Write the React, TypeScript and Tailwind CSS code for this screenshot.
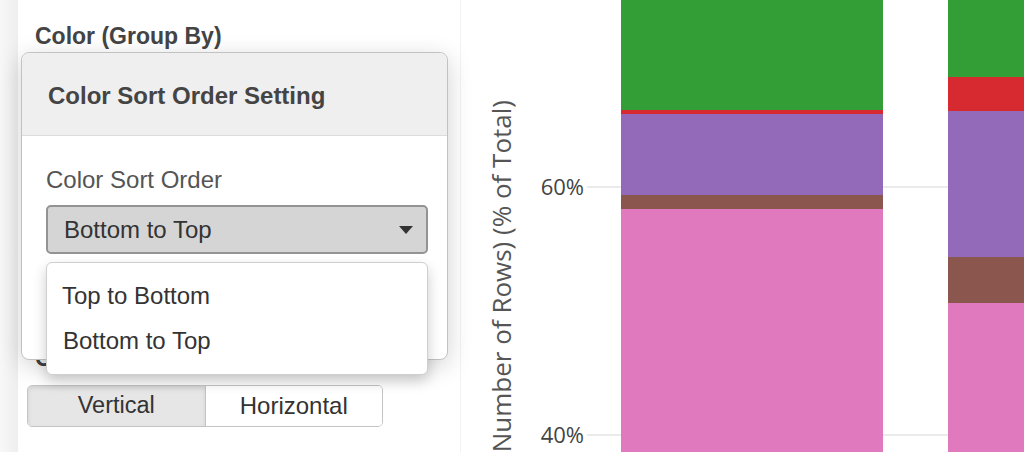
import React from "react";

const bar1 = [
  { y: 0, h: 110, c: "#339e35" },
  { y: 110, h: 4, c: "#d62a30" },
  { y: 114, h: 81, c: "#9369b9" },
  { y: 195, h: 14, c: "#8b564d" },
  { y: 209, h: 243, c: "#e079bd" },
];

const bar2 = [
  { y: 0, h: 77, c: "#339e35" },
  { y: 77, h: 34, c: "#d62a30" },
  { y: 111, h: 146, c: "#9369b9" },
  { y: 257, h: 46, c: "#8b564d" },
  { y: 303, h: 149, c: "#e079bd" },
];

const Caret = () => (
  <svg width="14" height="8" viewBox="0 0 14 8" className="shrink-0">
    <path d="M0 0 L14 0 L7 8 Z" fill="#333" />
  </svg>
);

const SortPopover = () => (
  <div className="absolute left-[3px] top-[52px] w-[427px] h-[308px] bg-white border-[1.5px] border-[#c2c2c2] rounded-[8px] shadow-[0_6px_24px_rgba(0,0,0,0.18)]">
    <div className="h-[83px] flex items-center pt-[3px] px-[26px] bg-[#efefef] border-b border-[#dcdcdc] rounded-t-[8px]">
      <h3 className="text-[24px] font-bold text-[#444]">Color Sort Order Setting</h3>
    </div>
    <div className="flex flex-col pl-[24px] pr-[19px] pt-[30px]">
      <label className="text-[24px] leading-[28px] text-[#555]">Color Sort Order</label>
      <div className="relative mt-[11px]">
        <div className="h-[49px] flex items-center justify-between pl-[16px] pr-[13px] bg-[#d5d5d5] border-2 border-[#939393] rounded-[5px]">
          <span className="text-[24px] text-[#333]">Bottom to Top</span>
          <Caret />
        </div>
        <ul className="absolute left-0 right-0 top-full mt-[8px] z-10 pt-[10px] pb-[11px] bg-white border border-[#cfcfcf] rounded-[6px] shadow-[0_6px_14px_rgba(0,0,0,0.2)]">
          <li className="h-[45px] flex items-center px-[15px] text-[24px] text-[#333]">Top to Bottom</li>
          <li className="h-[45px] flex items-center px-[16px] text-[24px] text-[#333]">Bottom to Top</li>
        </ul>
      </div>
      <button className="mt-[44px] h-[49px] w-full border-2 border-[#aaa] rounded-[5px] bg-white text-[24px] text-[#333]">
        Apply
      </button>
    </div>
  </div>
);

const Chart = () => (
  <svg width="564" height="452" viewBox="0 0 564 452" className="block" style={{ fontFamily: "'Open Sans', sans-serif" }}>
    <line x1="126" y1="187" x2="564" y2="187" stroke="#ebebeb" strokeWidth="2" />
    <line x1="126" y1="435" x2="564" y2="435" stroke="#ebebeb" strokeWidth="2" />
    {bar1.map((s, i) => (
      <rect key={`a${i}`} x="160" y={s.y} width="262" height={s.h} fill={s.c} />
    ))}
    {bar2.map((s, i) => (
      <rect key={`b${i}`} x="487" y={s.y} width="80" height={s.h} fill={s.c} />
    ))}
    <text x="123" y="195" textAnchor="end" fontSize="22" fill="#444">60%</text>
    <text x="123" y="443" textAnchor="end" fontSize="22" fill="#444">40%</text>
    <text transform="translate(50,100) rotate(-90)" textAnchor="end" fontSize="26" fill="#555">
      Sum(Number of Rows) (% of Total)
    </text>
  </svg>
);

export default function App() {
  return (
    <div
      className="w-[1024px] h-[452px] flex overflow-hidden bg-white"
      style={{ fontFamily: "'Liberation Sans', Arial, sans-serif" }}
    >
      <div className="w-[18px] shrink-0 bg-gradient-to-r from-[#f8f8f8] to-[#eeeeee]" />
      <div className="relative w-[442px] shrink-0 flex flex-col pl-[17px] pt-[22px] pb-[25px] bg-white">
        <label className="text-[23px] leading-[28px] font-bold text-[#444]">Color (Group By)</label>
        <div className="mt-[8px] h-[44px] w-[356px] border border-[#ccc] rounded-[4px]" />
        <label className="mt-auto mb-[13px] text-[23px] leading-[28px] font-bold text-[#444]">Orientation</label>
        <div className="ml-[-8px] w-[356px] h-[42px] flex border border-[#c4c4c4] rounded-[5px] overflow-hidden">
          <button className="flex-1 bg-[#e6e6e6] border-r border-[#c4c4c4] shadow-[inset_0_2px_4px_rgba(0,0,0,0.1)] text-[23.5px] text-[#333]">
            Vertical
          </button>
          <button className="flex-1 bg-white text-[24px] text-[#333]">Horizontal</button>
        </div>
        <SortPopover />
      </div>
      <div className="flex-1 border-l border-[#f2f2f2] overflow-hidden">
        <Chart />
      </div>
    </div>
  );
}
